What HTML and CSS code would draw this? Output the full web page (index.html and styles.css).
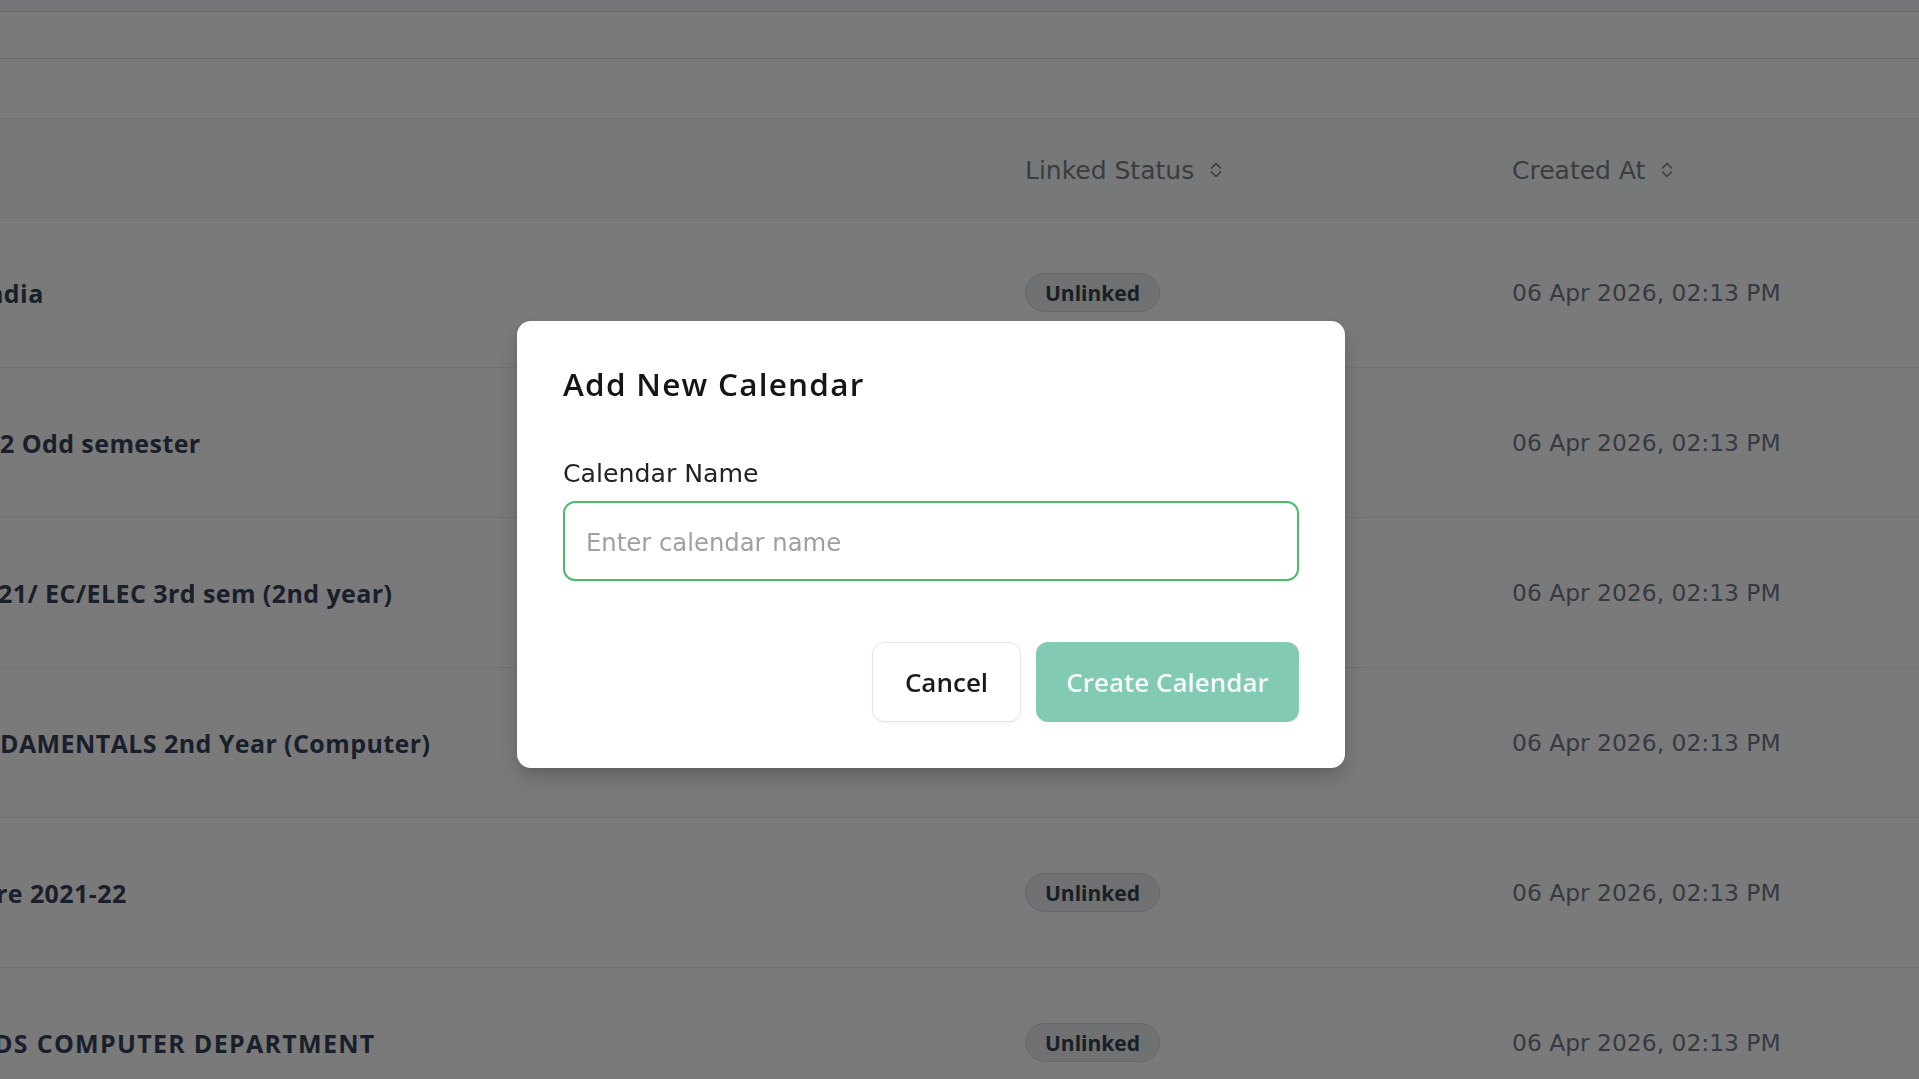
FILE: index.html
```html
<!DOCTYPE html>
<html lang="en">
<head>
<meta charset="utf-8">
<title>Calendars</title>
<link rel="stylesheet" href="styles.css">
</head>
<body>
<div class="page">
  <div class="topbar"></div>
  <div class="band band-a"></div>
  <div class="band band-b"></div>
  <div class="table">
    <div class="row head">
      <div class="cell name"></div>
      <div class="cell status"><span class="th">Linked Status</span>
        <svg class="sort" viewBox="0 0 14 18" width="14" height="18"><path d="M2.5 7 7 2.5 11.5 7M2.5 11 7 15.5 11.5 11"/></svg>
      </div>
      <div class="cell date"><span class="th">Created At</span>
        <svg class="sort" viewBox="0 0 14 18" width="14" height="18"><path d="M2.5 7 7 2.5 11.5 7M2.5 11 7 15.5 11.5 11"/></svg>
      </div>
    </div>
    <div class="row">
      <div class="cell name"><span class="nm cut-n">ndia</span></div>
      <div class="cell status"><span class="badge">Unlinked</span></div>
      <div class="cell date"><span class="dt">06 Apr 2026, 02:13 PM</span></div>
    </div>
    <div class="row">
      <div class="cell name"><span class="nm">2 Odd semester</span></div>
      <div class="cell status"><span class="badge">Unlinked</span></div>
      <div class="cell date"><span class="dt">06 Apr 2026, 02:13 PM</span></div>
    </div>
    <div class="row">
      <div class="cell name"><span class="nm cut-s">21/ EC/ELEC 3rd sem (2nd year)</span></div>
      <div class="cell status"><span class="badge">Unlinked</span></div>
      <div class="cell date"><span class="dt">06 Apr 2026, 02:13 PM</span></div>
    </div>
    <div class="row">
      <div class="cell name"><span class="nm">DAMENTALS 2nd Year (Computer)</span></div>
      <div class="cell status"><span class="badge">Unlinked</span></div>
      <div class="cell date"><span class="dt">06 Apr 2026, 02:13 PM</span></div>
    </div>
    <div class="row">
      <div class="cell name"><span class="nm cut-r">re 2021-22</span></div>
      <div class="cell status"><span class="badge">Unlinked</span></div>
      <div class="cell date"><span class="dt">06 Apr 2026, 02:13 PM</span></div>
    </div>
    <div class="row">
      <div class="cell name"><span class="nm caps cut-d">DS COMPUTER DEPARTMENT</span></div>
      <div class="cell status"><span class="badge">Unlinked</span></div>
      <div class="cell date"><span class="dt">06 Apr 2026, 02:13 PM</span></div>
    </div>
  </div>
</div>

<div class="overlay">
  <div class="modal" role="dialog" aria-labelledby="dlg-title">
    <h2 id="dlg-title" class="modal-title">Add New Calendar</h2>
    <label class="field-label" for="cal-name">Calendar Name</label>
    <input id="cal-name" class="field-input" type="text" placeholder="Enter calendar name">
    <div class="actions">
      <button class="btn btn-cancel" type="button">Cancel</button>
      <button class="btn btn-create" type="button">Create Calendar</button>
    </div>
  </div>
</div>
</body>
</html>
```
FILE: styles.css
```css
* { box-sizing: border-box; }
html, body { margin: 0; padding: 0; }
body {
  width: 1919px;
  height: 1079px;
  overflow: hidden;
  background: #ffffff;
  font-family: "DejaVu Sans", "Open Sans", sans-serif;
}

.page { display: flex; flex-direction: column; }

.topbar {
  height: 12px;
  background: #f1f4f8;
  border-bottom: 1px solid #d8dce2;
  box-shadow: 0 1px 3px rgba(0,0,0,0.06);
}
.band { background: #ffffff; }
.band-a {
  height: 47px;
  border-bottom: 1px solid #dcdfe3;
  box-shadow: 0 1px 3px rgba(0,0,0,0.06);
}
.band-b {
  height: 60px;
  border-bottom: 1px solid #eceef0;
}

.table { display: flex; flex-direction: column; }
.row {
  display: grid;
  grid-template-columns: 1025px 487px 1fr;
  height: 150px;
  border-bottom: 1px solid #ebedf0;
  align-items: center;
}
.row.head {
  height: 99px;
  padding-top: 4px;
  background: #f9fbfa;
  border-bottom: 1px solid #e8ebee;
}
.cell { display: flex; align-items: center; min-width: 0; }
.cell.name { overflow: hidden; }

.th {
  font-size: 25px;
  color: #787f89;
  white-space: nowrap;
}
.sort {
  margin-left: 15px;
  fill: none;
  stroke: #80868f;
  stroke-width: 1.7;
  stroke-linecap: round;
  stroke-linejoin: round;
}

.nm {
  font-family: "Open Sans", "DejaVu Sans", sans-serif;
  font-weight: 700;
  font-size: 25px;
  letter-spacing: 0.42px;
  color: #37435a;
  white-space: nowrap;
}
.nm.caps { letter-spacing: 1.3px; }
.cut-n { margin-left: -13px; }
.cut-s { margin-left: -2px; }
.cut-r { margin-left: -4px; }
.cut-d { margin-left: -6px; }

.badge {
  display: inline-flex;
  align-items: center;
  height: 39px;
  padding: 0 19px;
  border-radius: 20px;
  background: #e8ecf1;
  border: 1.5px solid #d3d9e0;
  font-family: "Open Sans", "DejaVu Sans", sans-serif;
  font-weight: 700;
  font-size: 21px;
  color: #35414f;
}

.dt {
  font-size: 23.4px;
  color: #6f7a8c;
  white-space: nowrap;
}

/* overlay + dialog */
.overlay {
  position: fixed;
  inset: 0;
  background: rgba(0,0,0,0.52);
  display: flex;
  align-items: center;
  justify-content: center;
  padding: 10px 57px 0 0;
}
.modal {
  width: 828px;
  background: #ffffff;
  border-radius: 14px;
  padding: 45px 46px 46px 46px;
  display: flex;
  flex-direction: column;
  box-shadow: 0 10px 25px rgba(0,0,0,0.18), 0 4px 8px rgba(0,0,0,0.08);
}
.modal-title {
  margin: 0;
  font-family: "Open Sans", "DejaVu Sans", sans-serif;
  font-weight: 600;
  font-size: 31.5px;
  letter-spacing: 1.25px;
  line-height: 36px;
  color: #151515;
}
.field-label {
  margin-top: 56px;
  font-size: 25.2px;
  line-height: 32px;
  color: #232323;
}
.field-input {
  margin-top: 11px;
  height: 80px;
  width: 100%;
  border: 2px solid #4bbb6c;
  border-radius: 12px;
  padding: 3px 21px 0 21px;
  font-family: "DejaVu Sans", sans-serif;
  font-size: 24.3px;
  color: #222;
  outline: none;
  background: #fff;
}
.field-input::placeholder { color: #a0a0a0; }

.actions {
  margin-top: 61px;
  display: flex;
  justify-content: flex-end;
  gap: 15px;
}
.btn {
  height: 80px;
  border-radius: 12px;
  font-family: "Open Sans", "DejaVu Sans", sans-serif;
  font-weight: 600;
  font-size: 26px;
  cursor: pointer;
}
.btn-cancel {
  width: 149px;
  background: #ffffff;
  border: 1.5px solid #e4e5e7;
  color: #1a1a1a;
  box-shadow: 0 1px 2px rgba(0,0,0,0.05);
}
.btn-create {
  width: 263px;
  background: #82cab3;
  border: none;
  color: #f4fbf8;
}
```
